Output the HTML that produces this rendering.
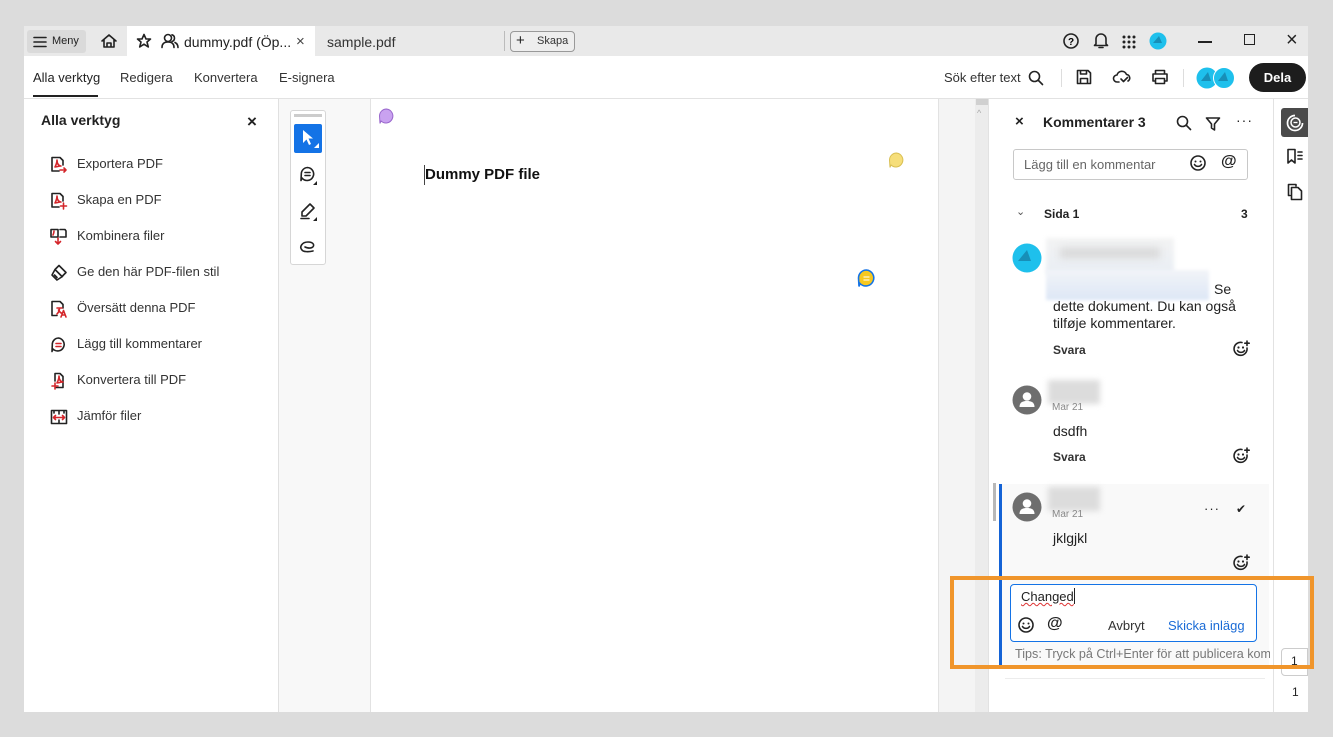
<!DOCTYPE html>
<html><head><meta charset="utf-8"><style>
*{box-sizing:border-box;margin:0;padding:0}
body{width:1333px;height:737px;background:#dcdcdc;font-family:"Liberation Sans",sans-serif;color:#222;position:relative;overflow:hidden;font-size:13px}
.a{position:absolute}
svg{position:absolute;overflow:visible}
.ic{stroke:#222;fill:none;stroke-width:1.6;stroke-linecap:round;stroke-linejoin:round}
.red{stroke:#d4262b}
</style></head><body>
<div class="a" style="left:24px;top:26px;width:1284px;height:686px;background:#fff"></div>
<div class="a" style="left:24px;top:26px;width:1284px;height:30px;background:#e9e9e9"></div>
<div class="a" style="left:27px;top:30px;width:59px;height:23px;background:#dadada;border-radius:3px"></div>
<svg style="left:33px;top:36px" width="14" height="12"><path class="ic" d="M1 1.5H13M1 6H13M1 10.5H13"/></svg>
<div class="a" style="left:52px;top:35px;font-size:11px">Meny</div>
<svg style="left:100px;top:33px" width="18" height="16"><path class="ic" d="M2 8L9 2L16 8M4 6.5V14H14V6.5M7 14V10H11V14"/></svg>
<div class="a" style="left:127px;top:26px;width:188px;height:30px;background:#fff"></div>
<svg style="left:136px;top:33px" width="16" height="16"><path class="ic" stroke-width="1.3" d="M8 1.5L10 6H14.5L11 9L12.3 14L8 11.2L3.7 14L5 9L1.5 6H6Z"/></svg>
<svg style="left:161px;top:33px" width="18" height="16"><circle class="ic" stroke-width="1.4" cx="7" cy="5" r="3.5"/><path class="ic" stroke-width="1.4" d="M1 14.5C1 10 4 9 7 9S13 10 13 14.5M11 1.8A3.5 3.5 0 0 1 11 8.5M14 9.5C16 10.5 17 12 17 14.5"/></svg>
<div class="a" style="left:184px;top:34px;font-size:14px">dummy.pdf (Öp...</div>
<div class="a" style="left:296px;top:33px;font-size:15px;color:#444">×</div>
<div class="a" style="left:327px;top:34px;font-size:14px;color:#333">sample.pdf</div>
<div class="a" style="left:504px;top:31px;width:1px;height:20px;background:#bbb"></div>
<div class="a" style="left:510px;top:31px;width:65px;height:21px;border:1px solid #999;border-radius:4px;background:#eee"></div>
<div class="a" style="left:516px;top:32px;font-size:15px">+</div>
<div class="a" style="left:537px;top:35px;font-size:11px;color:#333">Skapa</div>
<svg style="left:1063px;top:33px" width="16" height="16"><circle class="ic" stroke-width="1.4" cx="8" cy="8" r="7"/><text x="8" y="12" text-anchor="middle" font-size="10" font-weight="bold" font-family="Liberation Sans">?</text></svg>
<svg style="left:1093px;top:32px" width="16" height="17"><path class="ic" stroke-width="1.4" d="M3 12V7A5 5 0 0 1 13 7V12L14.5 13.5H1.5ZM6 15.5H10"/></svg>
<svg style="left:1122px;top:35px" width="14" height="14" fill="#222"><circle cx="2" cy="2" r="1.5"/><circle cx="7" cy="2" r="1.5"/><circle cx="12" cy="2" r="1.5"/><circle cx="2" cy="7" r="1.5"/><circle cx="7" cy="7" r="1.5"/><circle cx="12" cy="7" r="1.5"/><circle cx="2" cy="12" r="1.5"/><circle cx="7" cy="12" r="1.5"/><circle cx="12" cy="12" r="1.5"/></svg>
<svg style="left:1149px;top:32px" width="18" height="18"><circle cx="9" cy="9" r="8.5" fill="#1ec0ec"/><path d="M4 11L10 4L13 11Z" fill="#178fb8"/></svg>
<div class="a" style="left:1198px;top:41px;width:14px;height:1.5px;background:#222"></div>
<div class="a" style="left:1244px;top:34px;width:11px;height:11px;border:1.4px solid #222"></div>
<div class="a" style="left:1286px;top:29px;font-size:20px;color:#222">×</div>
<div class="a" style="left:24px;top:98px;width:1284px;height:1px;background:#e2e2e2"></div>
<div class="a" style="left:33px;top:70px;font-size:13px">Alla verktyg</div>
<div class="a" style="left:33px;top:95px;width:65px;height:2px;background:#222"></div>
<div class="a" style="left:120px;top:70px;font-size:13px;color:#333">Redigera</div>
<div class="a" style="left:194px;top:70px;font-size:13px;color:#333">Konvertera</div>
<div class="a" style="left:279px;top:70px;font-size:13px;color:#333">E-signera</div>
<div class="a" style="left:944px;top:70px;font-size:13px;color:#333">Sök efter text</div>
<svg style="left:1028px;top:70px" width="16" height="16"><circle class="ic" stroke-width="1.7" cx="6.5" cy="6.5" r="5"/><path class="ic" stroke-width="1.7" d="M10.5 10.5L14.5 14.5"/></svg>
<div class="a" style="left:1061px;top:69px;width:1px;height:18px;background:#ddd"></div>
<svg style="left:1076px;top:69px" width="16" height="16"><path class="ic" stroke-width="1.4" d="M1.5 1.5H12L14.5 4V14.5H1.5ZM4.5 1.5V5H10.5V1.5M4.5 14.5V9.5H11.5V14.5"/></svg>
<svg style="left:1113px;top:69px" width="18" height="16"><path class="ic" stroke-width="1.4" d="M6 13H4A3.5 3.5 0 0 1 4 6A5 5 0 0 1 13.5 5.5A3.5 3.5 0 0 1 15 12M8 10L10.5 12.5L14.5 8.5"/></svg>
<svg style="left:1151px;top:69px" width="18" height="16"><path class="ic" stroke-width="1.4" d="M4.5 5V1.5H13.5V5M2 5H16V12H13.5M4.5 12H2V5M4.5 9.5H13.5V14.5H4.5Z"/></svg>
<div class="a" style="left:1183px;top:69px;width:1px;height:18px;background:#ddd"></div>
<svg style="left:1196px;top:67px" width="42" height="22"><circle cx="11" cy="11" r="10.5" fill="#1ec0ec"/><path d="M5 14L12 5L15 14Z" fill="#178fb8"/><circle cx="28" cy="11" r="10.5" fill="#1ec0ec" stroke="#fff" stroke-width="1"/><path d="M22 14L29 5L32 14Z" fill="#178fb8"/></svg>
<div class="a" style="left:1249px;top:63px;width:57px;height:29px;border-radius:15px;background:#1d1d1d;color:#fff;font-weight:bold;font-size:13px;text-align:center;line-height:29px">Dela</div>
<div class="a" style="left:278px;top:99px;width:1px;height:613px;background:#e0e0e0"></div>
<div class="a" style="left:41px;top:112px;font-size:14px;font-weight:bold">Alla verktyg</div>
<div class="a" style="left:247px;top:112px;font-size:17px;font-weight:bold">×</div>
<div class="a" style="left:77px;top:146px;line-height:36px;font-size:13px;color:#333">Exportera PDF<br>Skapa en PDF<br>Kombinera filer<br>Ge den här PDF-filen stil<br>Översätt denna PDF<br>Lägg till kommentarer<br>Konvertera till PDF<br>Jämför filer</div>
<svg style="left:50px;top:156px" width="18" height="18"><path class="ic" stroke-width="1.3" d="M2 1.5H10L13 4.5V9M2 1.5V15H9"/><path class="ic red" stroke-width="1.3" d="M5 11C7 7 7 5 7 4C7 8 9 10 11 10C9 10 6 11 5 11ZM10 14H16M14 12L16 14L14 16"/></svg>
<svg style="left:50px;top:192px" width="18" height="18"><path class="ic" stroke-width="1.3" d="M2 1.5H10L13 4.5V9M2 1.5V15H9"/><path class="ic red" stroke-width="1.3" d="M5 11C7 7 7 5 7 4C7 8 9 10 11 10C9 10 6 11 5 11ZM13.5 11V17M10.5 14H16.5"/></svg>
<svg style="left:50px;top:228px" width="18" height="18"><path class="ic" stroke-width="1.3" d="M1 1.5H8V9H1ZM10 1.5H15L16 3V9H10"/><path class="ic red" stroke-width="1.3" d="M8 10V16M5.5 13.5L8 16L10.5 13.5M3 7C4 5 4 4 4 3"/></svg>
<svg style="left:50px;top:264px" width="18" height="18"><path class="ic" stroke-width="1.3" d="M9 1.5L16 8.5L12 12.5L5 5.5ZM5 5.5L2 11L4 13L7 16L12.5 12.5M4.5 11L7 13.5"/></svg>
<svg style="left:50px;top:300px" width="18" height="18"><path class="ic" stroke-width="1.3" d="M2 1.5H10L13 4.5V8M2 1.5V15.5H7"/><path class="ic red" stroke-width="1.3" d="M7 8H12M9.5 8C9.5 11 8 13 7 14M8.5 10C9.5 12 11 13 12 13.5M11 17L13.5 10.5L16 17M12 15H15"/></svg>
<svg style="left:50px;top:336px" width="18" height="18"><path class="ic" stroke-width="1.4" d="M8.5 2A6.5 6.5 0 1 1 3 13L2 15.5L2.3 9A6.5 6.5 0 0 1 8.5 2Z"/><path class="ic red" stroke-width="1.4" d="M6 7.5H11M6 10.5H11"/></svg>
<svg style="left:50px;top:372px" width="18" height="18"><path class="ic" stroke-width="1.3" d="M5 1.5H10L13 4.5V15.5H6M5 1.5V9"/><path class="ic red" stroke-width="1.3" d="M7 11C9 7 9 5 9 4C9 8 11 10 13 10C11 10 8 11 7 11ZM5 11V17M2 14H8"/></svg>
<svg style="left:50px;top:408px" width="18" height="18"><path class="ic" stroke-width="1.3" d="M1.5 2.5H16.5V15.5H1.5ZM9 2.5V6M9 12V15.5M4 2.5V5M14 2.5V5"/><path class="ic red" stroke-width="1.3" d="M3.5 9.5H14.5M5.5 7.5L3.5 9.5L5.5 11.5M12.5 7.5L14.5 9.5L12.5 11.5"/></svg>
<div class="a" style="left:279px;top:99px;width:91px;height:613px;background:#f8f8f8"></div>
<div class="a" style="left:370px;top:99px;width:1px;height:613px;background:#e2e2e2"></div>
<div class="a" style="left:290px;top:110px;width:36px;height:155px;background:#fff;border:1px solid #d6d6d6;border-radius:3px"></div>
<div class="a" style="left:294px;top:114px;width:28px;height:3px;background:#ccc"></div>
<div class="a" style="left:294px;top:124px;width:28px;height:29px;background:#1473e6;border-radius:2px"></div>
<svg style="left:302px;top:129px" width="18" height="20"><path d="M1 1L1 14L4.5 10.5L7 16L9 15L6.5 9.5H11Z" fill="#fff"/><path d="M17 14V19H12Z" fill="#fff"/></svg>
<svg style="left:299px;top:166px" width="20" height="20"><path class="ic" stroke-width="1.5" d="M8.5 1.5A6.5 6.5 0 1 1 3 12L2 14.5L2.3 8A6.5 6.5 0 0 1 8.5 1.5ZM6 6.5H11M6 9.5H11"/><path d="M18 15V19H14Z" fill="#222"/></svg>
<svg style="left:299px;top:202px" width="20" height="20"><path class="ic" stroke-width="1.5" d="M11 2L15 6L7 14H3V10ZM2 16.5H10"/><path d="M18 15V19H14Z" fill="#222"/></svg>
<svg style="left:299px;top:239px" width="18" height="16"><path class="ic" stroke-width="1.5" d="M3 11C0 8 3 3 9 3C15 3 16 7 13 8.5C10 10 6 8 6 8M3 11C4 13 10 13 14 12"/></svg>
<svg style="left:378px;top:108px" width="18" height="18"><path d="M8.5 1A7 7 0 1 1 3 13L2 15.5L1.5 8A7 7 0 0 1 8.5 1Z" fill="#c9a2f0" stroke="#9966cc" stroke-width="1"/></svg>
<svg style="left:888px;top:152px" width="18" height="18"><path d="M8.5 1A7 7 0 1 1 3 13L2 15.5L1.5 8A7 7 0 0 1 8.5 1Z" fill="#f6de7a" stroke="#d9bf52" stroke-width="1"/></svg>
<svg style="left:857px;top:269px" width="20" height="20"><path d="M9.5 1A8 8 0 1 1 3 14.5L2 17.5L1.5 9A8 8 0 0 1 9.5 1Z" fill="#f7c81f" stroke="#1473e6" stroke-width="1.6"/><path d="M6.5 8H12.5M6.5 11H12.5" stroke="#fff" stroke-width="1"/></svg>
<div class="a" style="left:424px;top:165px;width:1px;height:20px;background:#444"></div>
<div class="a" style="left:425px;top:166px;font-size:15px;font-weight:bold;color:#111">Dummy PDF file</div>
<div class="a" style="left:938px;top:99px;width:37px;height:613px;background:#f4f4f4;border-left:1px solid #e2e2e2"></div>
<div class="a" style="left:975px;top:99px;width:13px;height:613px;background:#ececec"></div>
<div class="a" style="left:976px;top:99px;width:12px;height:6px;background:#d0d0d0"></div>
<div class="a" style="left:977px;top:108px;font-size:9px;color:#aaa">^</div>
<div class="a" style="left:988px;top:99px;width:1px;height:613px;background:#e2e2e2"></div>
<div class="a" style="left:1015px;top:113px;font-size:15px;font-weight:bold">×</div>
<div class="a" style="left:1043px;top:114px;font-size:14px;font-weight:bold">Kommentarer 3</div>
<svg style="left:1176px;top:115px" width="16" height="16"><circle class="ic" stroke-width="1.7" cx="6.5" cy="6.5" r="5"/><path class="ic" stroke-width="1.7" d="M10.5 10.5L14.5 14.5"/></svg>
<svg style="left:1205px;top:116px" width="16" height="16"><path class="ic" stroke-width="1.5" d="M1.5 2H14.5L9.5 8V14L6.5 12V8Z"/></svg>
<div class="a" style="left:1236px;top:112px;font-size:14px;letter-spacing:1px">···</div>
<div class="a" style="left:1013px;top:149px;width:235px;height:31px;border:1px solid #c8c8c8;border-radius:3px"></div>
<div class="a" style="left:1024px;top:157px;font-size:13px;color:#666">Lägg till en kommentar</div>
<svg style="left:1190px;top:155px" width="18" height="18"><circle class="ic" stroke-width="1.5" cx="8" cy="8" r="7"/><circle cx="5.5" cy="6.5" r="1" fill="#222"/><circle cx="10.5" cy="6.5" r="1" fill="#222"/><path class="ic" stroke-width="1.4" d="M4.5 9.5C6 12 10 12 11.5 9.5"/></svg>
<div class="a" style="left:1221px;top:153px;font-size:16px;font-weight:bold">@</div>
<div class="a" style="left:1016px;top:205px;font-size:11px;color:#555">⌄</div>
<div class="a" style="left:1044px;top:207px;font-size:12px;font-weight:bold">Sida 1</div>
<div class="a" style="left:1241px;top:207px;font-size:12px;font-weight:bold">3</div>
<svg style="left:1012px;top:243px" width="30" height="30"><circle cx="15" cy="15" r="14.5" fill="#1ec0ec"/><path d="M6 18L15 7L19 18Z" fill="#178fb8"/></svg>
<div class="a" style="left:1046px;top:238px;width:128px;height:36px;background:linear-gradient(#f3f3f3,#e9eef5);filter:blur(2px)"></div>
<div class="a" style="left:1060px;top:248px;width:100px;height:10px;background:#d8d8d8;filter:blur(4px)"></div>
<div class="a" style="left:1046px;top:270px;width:163px;height:30px;background:linear-gradient(#f2f4f8,#dde7f6);filter:blur(1.5px)"></div>
<div class="a" style="left:1214px;top:281px;font-size:14px">Se</div>
<div class="a" style="left:1053px;top:298px;font-size:14px;line-height:17px;color:#222">dette dokument. Du kan også<br>tilføje kommentarer.</div>
<div class="a" style="left:1053px;top:343px;font-size:12px;font-weight:bold;color:#333">Svara</div>
<svg style="left:1233px;top:340px" width="18" height="18"><path class="ic" stroke-width="1.7" d="M14 8A6.5 6.5 0 1 1 9 2.5"/><circle cx="5.5" cy="7.5" r="1.1" fill="#222"/><circle cx="10" cy="7.5" r="1.1" fill="#222"/><path class="ic" stroke-width="1.6" d="M4.5 10.5C6 13 10 13 11.5 10.5M14 1V5.5M11.8 3.2H16.2"/></svg>
<svg style="left:1012px;top:385px" width="30" height="30"><circle cx="15" cy="15" r="14.5" fill="#6e6e6e"/><circle cx="15" cy="11.5" r="4.3" fill="#fff"/><path d="M7.5 22C7.5 17 11 16 15 16S22.5 17 22.5 22Z" fill="#fff"/></svg>
<div class="a" style="left:1048px;top:380px;width:52px;height:24px;background:#dcdcdc;filter:blur(3px)"></div>
<div class="a" style="left:1052px;top:402px;font-size:10px;color:#888">Mar 21</div>
<div class="a" style="left:1053px;top:423px;font-size:14px">dsdfh</div>
<div class="a" style="left:1053px;top:450px;font-size:12px;font-weight:bold;color:#333">Svara</div>
<svg style="left:1233px;top:447px" width="18" height="18"><path class="ic" stroke-width="1.7" d="M14 8A6.5 6.5 0 1 1 9 2.5"/><circle cx="5.5" cy="7.5" r="1.1" fill="#222"/><circle cx="10" cy="7.5" r="1.1" fill="#222"/><path class="ic" stroke-width="1.6" d="M4.5 10.5C6 13 10 13 11.5 10.5M14 1V5.5M11.8 3.2H16.2"/></svg>
<div class="a" style="left:1000px;top:484px;width:269px;height:185px;background:#f9f9f9"></div>
<div class="a" style="left:999px;top:484px;width:3px;height:185px;background:#1463d6"></div>
<div class="a" style="left:993px;top:483px;width:3px;height:38px;background:#b8b8b8"></div>
<div class="a" style="left:1005px;top:678px;width:260px;height:1px;background:#ececec"></div>
<svg style="left:1012px;top:492px" width="30" height="30"><circle cx="15" cy="15" r="14.5" fill="#6e6e6e"/><circle cx="15" cy="11.5" r="4.3" fill="#fff"/><path d="M7.5 22C7.5 17 11 16 15 16S22.5 17 22.5 22Z" fill="#fff"/></svg>
<div class="a" style="left:1048px;top:487px;width:52px;height:24px;background:#dcdcdc;filter:blur(3px)"></div>
<div class="a" style="left:1052px;top:509px;font-size:10px;color:#888">Mar 21</div>
<div class="a" style="left:1204px;top:501px;font-size:13px;letter-spacing:1px">···</div>
<div class="a" style="left:1236px;top:502px;font-size:12px">✔</div>
<div class="a" style="left:1053px;top:530px;font-size:14px">jklgjkl</div>
<svg style="left:1233px;top:554px" width="18" height="18"><path class="ic" stroke-width="1.7" d="M14 8A6.5 6.5 0 1 1 9 2.5"/><circle cx="5.5" cy="7.5" r="1.1" fill="#222"/><circle cx="10" cy="7.5" r="1.1" fill="#222"/><path class="ic" stroke-width="1.6" d="M4.5 10.5C6 13 10 13 11.5 10.5M14 1V5.5M11.8 3.2H16.2"/></svg>
<div class="a" style="left:1010px;top:584px;width:247px;height:58px;border:1px solid #1473e6;border-radius:4px;background:#fff"></div>
<div class="a" style="left:1021px;top:589px;font-size:13px;text-decoration:underline wavy #d33;text-decoration-thickness:1px">Changed</div>
<div class="a" style="left:1074px;top:588px;width:1px;height:16px;background:#222"></div>
<svg style="left:1018px;top:617px" width="18" height="18"><circle class="ic" stroke-width="1.5" cx="8" cy="8" r="7"/><circle cx="5.5" cy="6.5" r="1" fill="#222"/><circle cx="10.5" cy="6.5" r="1" fill="#222"/><path class="ic" stroke-width="1.4" d="M4.5 9.5C6 12 10 12 11.5 9.5"/></svg>
<div class="a" style="left:1047px;top:615px;font-size:16px;font-weight:bold">@</div>
<div class="a" style="left:1108px;top:618px;font-size:13px;color:#333">Avbryt</div>
<div class="a" style="left:1168px;top:618px;font-size:13px;color:#1a6bd6">Skicka inlägg</div>
<div class="a" style="left:1015px;top:647px;font-size:12.6px;color:#777;white-space:nowrap;width:255px;overflow:hidden">Tips: Tryck på Ctrl+Enter för att publicera kommentar</div>
<div class="a" style="left:1273px;top:99px;width:1px;height:613px;background:#e2e2e2"></div>
<div class="a" style="left:1281px;top:108px;width:27px;height:29px;background:#4a4a4a;border-radius:3px 0 0 3px"></div>
<svg style="left:1286px;top:114px" width="18" height="18"><path d="M9 1.5A7.5 7.5 0 1 0 16.5 9" stroke="#fff" stroke-width="1.7" fill="none"/><circle cx="9.5" cy="8.5" r="4.5" stroke="#fff" stroke-width="1.5" fill="none"/><path d="M7.5 8.5H11.5" stroke="#fff" stroke-width="1.3"/></svg>
<svg style="left:1286px;top:148px" width="18" height="18"><path class="ic" stroke-width="1.5" d="M2 1.5H9V15L5.5 12L2 15ZM12 4H16M12 7.5H16M12 11H16"/></svg>
<svg style="left:1287px;top:183px" width="16" height="18"><path class="ic" stroke-width="1.5" d="M3 12.5H1.5V1.5H9V3M4.5 4.5H11L14.5 8V16.5H4.5Z"/></svg>
<div class="a" style="left:1281px;top:648px;width:27px;height:28px;border:1px solid #ccc;border-radius:4px 0 0 4px;background:#fff"></div>
<div class="a" style="left:1291px;top:654px;font-size:12px">1</div>
<div class="a" style="left:1292px;top:685px;font-size:12px">1</div>
<div class="a" style="left:950px;top:576px;width:364px;height:93px;border:4px solid #f0952b"></div>
</body></html>
